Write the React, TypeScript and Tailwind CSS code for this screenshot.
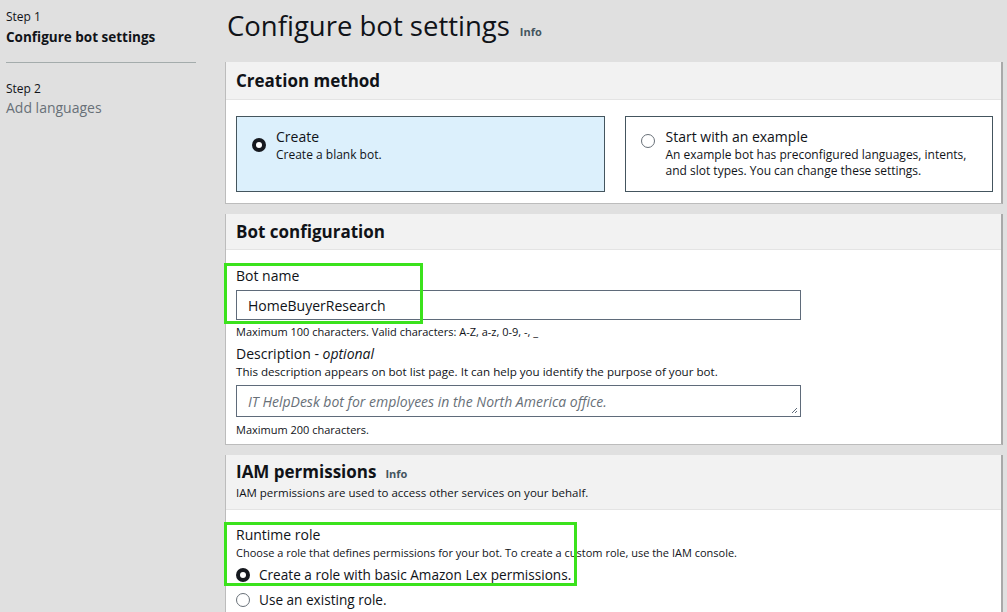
import React from 'react';

const Radio: React.FC<{ checked?: boolean }> = ({ checked }) =>
  checked ? (
    <span className="inline-flex h-[14px] w-[14px] shrink-0 items-center justify-center rounded-full bg-[#16191f]">
      <span className="h-[6px] w-[6px] rounded-full bg-white" />
    </span>
  ) : (
    <span className="inline-block h-[14px] w-[14px] shrink-0 rounded-full border border-[#687078] bg-white" />
  );

const Info: React.FC = () => (
  <span className="text-[11px] font-bold text-[#44555e]">Info</span>
);

const Panel: React.FC<{ header: React.ReactNode; children: React.ReactNode }> = ({ header, children }) => (
  <section className="border-l border-r-2 border-b border-[#bcbcbc] border-r-[#a9a9a9] bg-white">
    <div className="border-b border-[#e4e4e4] bg-[#f2f2f2] px-[10px]">{header}</div>
    {children}
  </section>
);

export default function App() {
  return (
    <div className="flex h-[612px] w-[1007px] overflow-hidden bg-[#e0e0e0] text-[#101318] [font-family:'Open_Sans',sans-serif]">
      {/* steps */}
      <aside className="w-[225px] shrink-0 pl-[6px] pr-[29px] pt-[8px]">
        <div className="text-[12px] leading-[18px]">Step 1</div>
        <div className="mt-[1px] text-[13.5px] font-bold leading-[20px]">Configure bot settings</div>
        <div className="mt-[15px] h-px bg-[#a4acac]" />
        <div className="mt-[17px] text-[12px] leading-[18px]">Step 2</div>
        <div className="text-[14px] leading-[20px] text-[#687078]">Add languages</div>
      </aside>

      {/* main */}
      <main className="relative w-[778px] shrink-0">
        <div className="flex h-[62px] items-baseline gap-[10px] pl-[2px] pt-[6px]">
          <h1 className="text-[27.5px] leading-[40px]">Configure bot settings</h1>
          <Info />
        </div>

        <Panel
          header={<h2 className="py-[8px] text-[17px] font-bold leading-[21px]">Creation method</h2>}
        >
          <div className="flex gap-[20px] pb-[11px] pl-[10px] pr-[8px] pt-[16px]">
            <div className="flex h-[76px] w-[370px] gap-[10px] border border-[#44555e] bg-[#dcf0fc] pl-[15px] pt-[10px]">
              <div className="pt-[3px]"><Radio checked /></div>
              <div>
                <div className="text-[14px] leading-[20px]">Create</div>
                <div className="text-[12px] leading-[16px]">Create a blank bot.</div>
              </div>
            </div>
            <div className="flex h-[76px] w-[370px] gap-[11px] border border-[#44555e] bg-white pl-[15px] pt-[10px]">
              <div className="pt-[3px]"><Radio /></div>
              <div>
                <div className="text-[14px] leading-[20px]">Start with an example</div>
                <div className="text-[12px] leading-[16px]">
                  An example bot has preconfigured languages, intents,
                  <br />
                  and slot types. You can change these settings.
                </div>
              </div>
            </div>
          </div>
        </Panel>

        <div className="h-[10px]" />

        <Panel
          header={<h2 className="py-[7px] text-[17px] font-bold leading-[21px]">Bot configuration</h2>}
        >
          <div className="pb-[6px] pl-[10px] pt-[16px]">
            <div className="text-[14px] leading-[20px]">Bot name</div>
            <div className="mt-[4px] flex h-[30px] w-[565px] items-center border border-[#5f6b7a] bg-white px-[11px] text-[14px]">
              HomeBuyerResearch
            </div>
            <div className="mt-[4px] text-[11px] leading-[16px]">
              Maximum 100 characters. Valid characters: A-Z, a-z, 0-9, -, _
            </div>
            <div className="mt-[4px] text-[14px] leading-[20px]">
              Description - <i>optional</i>
            </div>
            <div className="text-[11.6px] leading-[16px]">
              This description appears on bot list page. It can help you identify the purpose of your bot.
            </div>
            <div className="relative mt-[5px] flex h-[32px] w-[565px] items-center border border-[#5f6b7a] bg-white px-[11px] text-[14px] italic text-[#687078]">
              IT HelpDesk bot for employees in the North America office.
              <svg className="absolute bottom-[2px] right-[2px]" width="7" height="7" viewBox="0 0 7 7">
                <path d="M1 6L6 1M4 6L6 4" stroke="#5f6b7a" strokeWidth="1" />
              </svg>
            </div>
            <div className="mt-[5px] text-[11px] leading-[16px]">Maximum 200 characters.</div>
          </div>
        </Panel>

        <div className="h-[10px]" />

        <Panel
          header={
            <div className="pb-[8px] pt-[6px]">
              <div className="flex items-baseline gap-[9px]">
                <h2 className="text-[17px] font-bold leading-[22px]">IAM permissions</h2>
                <Info />
              </div>
              <div className="mt-[2px] text-[11.5px] leading-[16px]">
                IAM permissions are used to access other services on your behalf.
              </div>
            </div>
          }
        >
          <div className="pl-[10px] pt-[15px]">
            <div className="text-[14px] leading-[20px]">Runtime role</div>
            <div className="text-[11px] leading-[16px]">
              Choose a role that defines permissions for your bot. To create a custom role, use the IAM console.
            </div>
            <div className="mt-[3px] flex items-center gap-[9px] text-[13.6px] leading-[22px]">
              <Radio checked />
              Create a role with basic Amazon Lex permissions.
            </div>
            <div className="mt-[3px] flex items-center gap-[9px] text-[13.6px] leading-[22px]">
              <Radio />
              Use an existing role.
            </div>
            <div className="h-[40px]" />
          </div>
        </Panel>

        {/* annotation boxes */}
        <div className="pointer-events-none absolute left-[-1px] top-[263px] h-[61px] w-[199px] border-[3px] border-[#3be21c]" />
        <div className="pointer-events-none absolute left-[-1px] top-[522px] h-[64px] w-[353px] border-[3px] border-[#3be21c]" />
      </main>
    </div>
  );
}
